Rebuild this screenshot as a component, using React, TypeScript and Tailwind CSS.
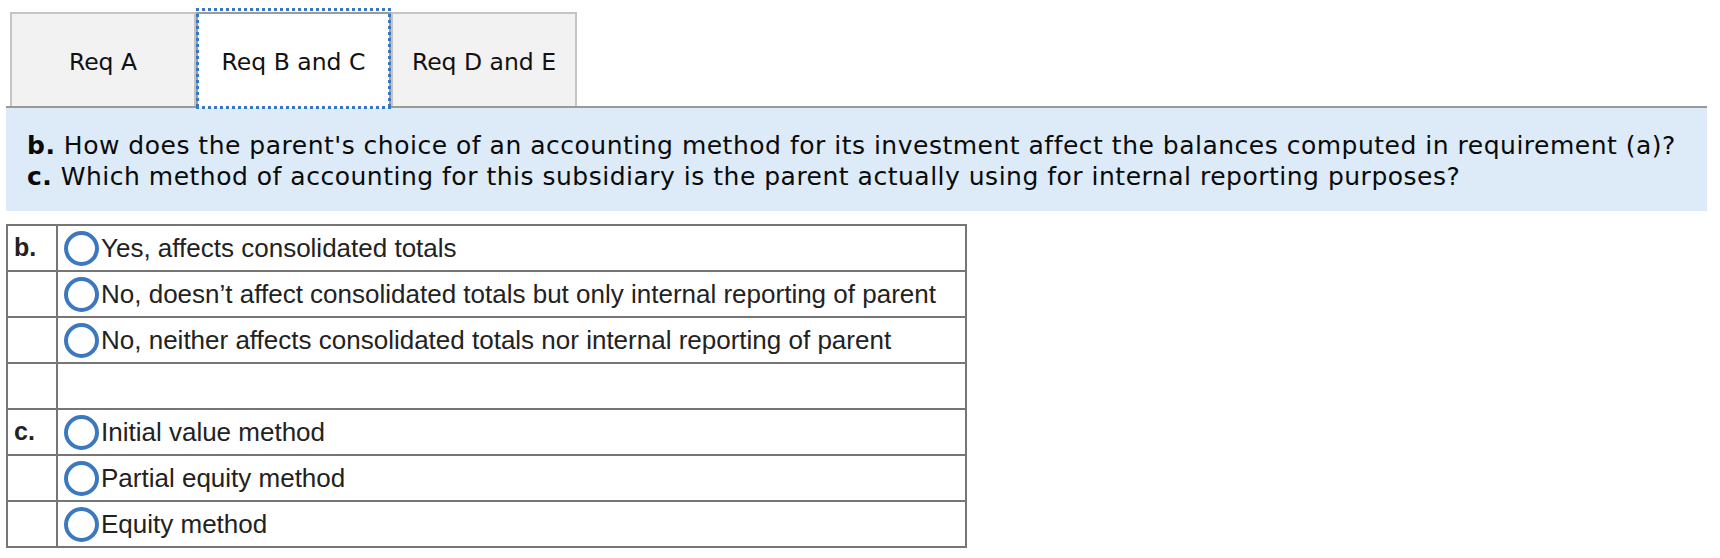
import React from "react";

const dotH = "bg-[repeating-linear-gradient(to_right,#3a77c2_0_3px,transparent_3px_6px)]";
const dotV = "bg-[repeating-linear-gradient(to_bottom,#3a77c2_0_3px,transparent_3px_6px)]";

function Radio() {
  return <span className="inline-block w-[35px] h-[35px] shrink-0 rounded-full border-[4px] border-[#3b78bf] bg-white" />;
}

type Row = { label?: string; text?: string };

const rows: Row[] = [
  { label: "b.", text: "Yes, affects consolidated totals" },
  { text: "No, doesn\u2019t affect consolidated totals but only internal reporting of parent" },
  { text: "No, neither affects consolidated totals nor internal reporting of parent" },
  {},
  { label: "c.", text: "Initial value method" },
  { text: "Partial equity method" },
  { text: "Equity method" },
];

export default function App() {
  return (
    <div className="w-[1720px] h-[558px] bg-white overflow-hidden">
      {/* Tabs */}
      <div className="flex items-start pt-[12px] pl-[10px] font-['DejaVu_Sans',sans-serif] text-[23.5px] text-[#111]">
        <div className="w-[186px] h-[94px] flex items-center justify-center border-2 border-b-0 border-[#c4c4c4] bg-[#f2f2f2] pt-[6px]">
          Req A
        </div>
        <div className="relative z-10 w-[195px] h-[96px] -mb-[2px] flex items-center justify-center border-2 border-b-0 border-[#9b9b9b] bg-white pt-[4px]">
          Req B and C
          <div className="absolute -top-[6px] -left-[2px] -right-[2px] -bottom-[1px] pointer-events-none">
            <div className={`absolute top-0 left-0 right-0 h-[3px] ${dotH}`} />
            <div className={`absolute bottom-0 left-0 right-0 h-[3px] ${dotH}`} />
            <div className={`absolute top-0 bottom-0 left-0 w-[3px] ${dotV}`} />
            <div className={`absolute top-0 bottom-0 right-0 w-[3px] ${dotV}`} />
          </div>
        </div>
        <div className="w-[186px] h-[94px] flex items-center justify-center border-2 border-b-0 border-[#c4c4c4] bg-[#f2f2f2] pt-[6px]">
          Req D and E
        </div>
      </div>

      {/* Question band */}
      <div className="ml-[6px] w-[1701px] border-t-2 border-[#9a9a9a] bg-[#dcebf7] pt-[22px] pb-[19px] pl-[21px] font-['DejaVu_Sans',sans-serif] text-[25px] tracking-[0.5px] leading-[31px] text-[#0a0a0a] whitespace-nowrap">
        <p>
          <b>b.</b> How does the parent's choice of an accounting method for its investment affect the balances computed in requirement (a)?
        </p>
        <p>
          <b>c.</b> Which method of accounting for this subsidiary is the parent actually using for internal reporting purposes?
        </p>
      </div>

      {/* Answer table */}
      <div className="ml-[6px] mt-[13px] w-[961px] border-2 border-[#767676] font-['Liberation_Sans',Arial,sans-serif] text-[26px] text-[#222]">
        {rows.map((r, i) => (
          <div key={i} className={`flex ${i > 0 ? "h-[46px] border-t-2 border-[#767676]" : "h-[44px]"}`}>
            <div className="w-[50px] shrink-0 border-r-2 border-[#767676] flex items-center pl-[6px] font-bold text-[25px]">
              {r.label ?? ""}
            </div>
            <div className="flex-1 flex items-center pl-[6px] gap-[2px] whitespace-nowrap">
              {r.text ? (
                <>
                  <Radio />
                  <span>{r.text}</span>
                </>
              ) : null}
            </div>
          </div>
        ))}
      </div>
    </div>
  );
}
